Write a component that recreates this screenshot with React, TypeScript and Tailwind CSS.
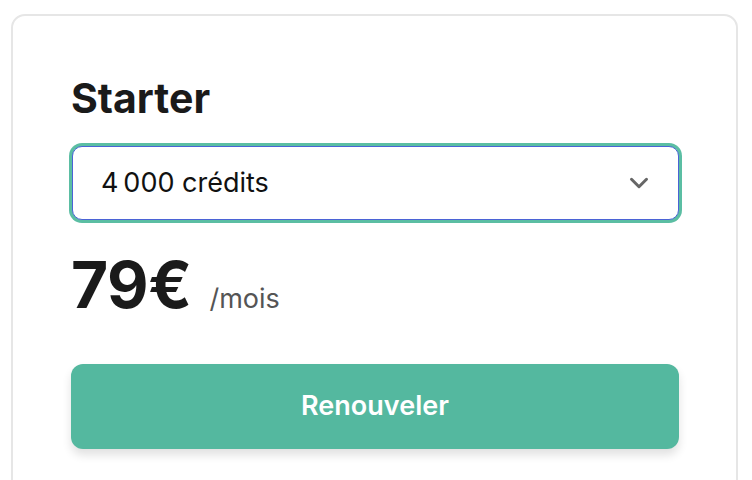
import { ChevronDown } from "lucide-react";

// ── Plan card ─────────────────────────────────────────────────────────────────

function PlanCard() {
  return (
    <div className="ml-[11px] mt-[14px] w-[727px] rounded-[14px] border-2 border-[#e6e6e6] bg-white px-[58px] pt-[58px] pb-[58px]">
      <h2 className="text-[41px] font-bold leading-[48px] text-[#1a1a1a]">Starter</h2>

      <div className="mt-[24px] ml-px flex h-[74px] w-[607px] items-center justify-between rounded-[10px] border border-[#4b63d6] bg-white pl-[28px] pr-[24px] ring-[3px] ring-[#5bbea3]">
        <span className="text-[27px] text-[#111]">{"4\u202F000 crédits"}</span>
        <ChevronDown className="h-[30px] w-[30px] text-[#666]" strokeWidth={2.4} />
      </div>

      <div className="mt-[33px] flex items-baseline gap-[18px]">
        <span className="text-[64px] font-bold leading-[64px] tracking-[-0.5px] text-[#1a1a1a]">79€</span>
        <span className="text-[27px] leading-[32px] text-[#555]">/mois</span>
      </div>

      <button className="mt-[47px] flex h-[85px] w-[608px] items-center justify-center rounded-[12px] bg-[#54b89f] text-[27px] font-semibold text-white shadow-[0_6px_10px_rgba(0,0,0,0.12)]">
        Renouveler
      </button>
    </div>
  );
}

export default function App() {
  return (
    <div className="min-h-screen bg-white font-['Inter','Liberation_Sans',sans-serif]">
      <PlanCard />
    </div>
  );
}
